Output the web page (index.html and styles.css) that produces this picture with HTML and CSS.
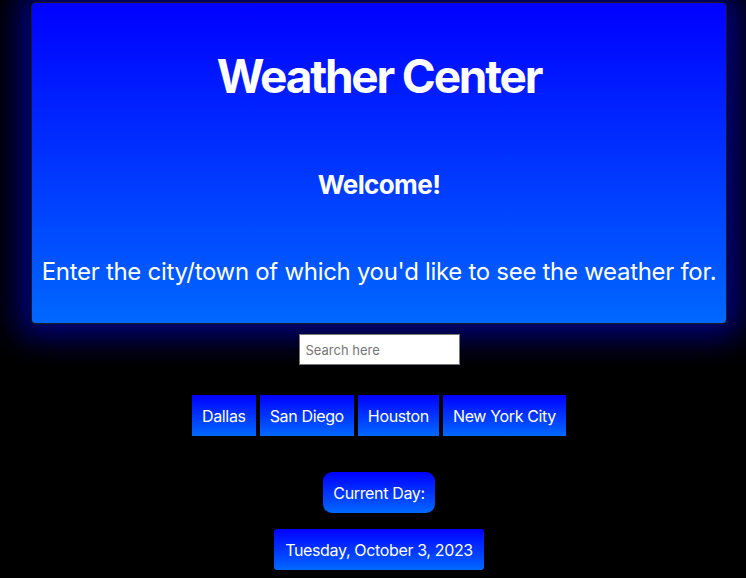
FILE: index.html
```html
<!DOCTYPE html>
<html lang="en">
<head>
<meta charset="utf-8">
<title>Weather Center</title>
<link rel="stylesheet" href="styles.css">
</head>
<body>
<main class="page">
  <header class="hero">
    <h1 class="title">Weather Center</h1>
    <h2 class="welcome">Welcome!</h2>
    <p class="lead">Enter the city/town of which you'd like to see the weather for.</p>
  </header>
  <div class="search-row">
    <input class="search" type="text" placeholder="Search here">
  </div>
  <div class="cities">
    <button class="city">Dallas</button>
    <button class="city">San Diego</button>
    <button class="city">Houston</button>
    <button class="city">New York City</button>
  </div>
  <div class="day-row">
    <div class="day-label">Current Day:</div>
  </div>
  <div class="date-row">
    <div class="date">Tuesday, October 3, 2023</div>
  </div>
</main>
</body>
</html>
```
FILE: styles.css
```css
html, body {
  margin: 0;
  background: #000;
  font-family: Inter, "Noto Sans", sans-serif;
  color: #fff;
}
.page {
  width: 696px;
  margin-left: 31px;
  padding-top: 2px;
}
.hero {
  box-sizing: border-box;
  width: 696px;
  height: 322px;
  border: 1px solid #1a1a1a;
  border-radius: 4px;
  background: linear-gradient(to bottom, #0000ff, #0068ff);
  box-shadow: 0 0 32px 12px rgba(0, 0, 190, 0.7);
  display: flex;
  flex-direction: column;
  align-items: center;
  text-align: center;
}
.title {
  margin: 45px 0 0;
  font-size: 46px;
  line-height: 56px;
  font-weight: 700;
  letter-spacing: -2.2px;
}
.welcome {
  margin: 65px 0 0;
  font-size: 26px;
  line-height: 32px;
  font-weight: 700;
  letter-spacing: -0.6px;
}
.lead {
  margin: 56px 0 0;
  font-size: 24px;
  line-height: 30px;
  letter-spacing: -0.3px;
}
.search-row {
  display: flex;
  justify-content: center;
  margin-top: 10px;
}
.search {
  box-sizing: border-box;
  width: 161px;
  height: 31px;
  border: 1px solid #767676;
  padding: 0 6px;
  font-family: Inter, sans-serif;
  font-size: 13px;
  color: #333;
}
.search::placeholder {
  color: #757575;
}
.cities {
  display: flex;
  justify-content: center;
  gap: 4px;
  margin-top: 30px;
}
.city {
  height: 41px;
  padding: 0 10px;
  border: none;
  border-radius: 0;
  background: linear-gradient(to bottom, #0000ff, #0068ff);
  color: #fff;
  font-family: Inter, sans-serif;
  font-size: 16px;
  letter-spacing: -0.35px;
}
.day-row, .date-row {
  display: flex;
  justify-content: center;
}
.day-row { margin-top: 36px; }
.date-row { margin-top: 16px; }
.day-label {
  height: 41px;
  padding: 0 10px;
  display: flex;
  align-items: center;
  border-radius: 9px;
  background: linear-gradient(to bottom, #0000ff, #0068ff);
  font-size: 16px;
  letter-spacing: -0.35px;
}
.date {
  height: 41px;
  padding: 0 11px;
  display: flex;
  align-items: center;
  border-radius: 3px;
  background: linear-gradient(to bottom, #0000ff, #0068ff);
  font-size: 16px;
  letter-spacing: -0.35px;
}
```
